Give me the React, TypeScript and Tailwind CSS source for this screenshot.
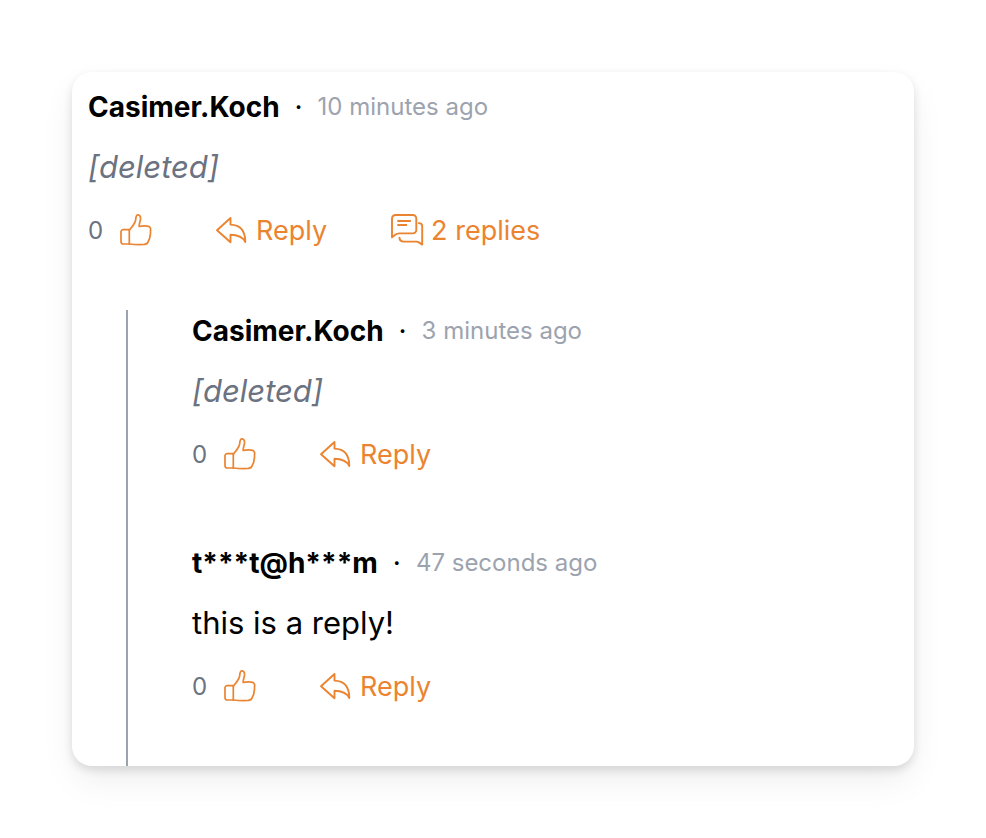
import type { ReactNode } from "react";

function Icon({ children, strokeWidth = 1.9 }: { children: ReactNode; strokeWidth?: number }) {
  return (
    <svg
      className="h-8 w-8 shrink-0 overflow-visible"
      viewBox="0 0 32 32"
      fill="none"
      stroke="currentColor"
      strokeWidth={strokeWidth}
      strokeLinejoin="round"
      strokeLinecap="round"
      aria-hidden="true"
    >
      {children}
    </svg>
  );
}

function LikeIcon() {
  return (
    <Icon strokeWidth={1.7}>
      <path d="M3.2 14.600h6.100v14.400H3.200a2.200 2.200 0 0 1-2.200-2.200v-10a2.200 2.200 0 0 1 2.200-2.200Z" />
      <path d="M9.300 15.200C11.600 12.500 14.900 8.500 15.600 5.200 15.900 3 15.700-.2 17.900-.2c2.300 0 3.100 2.600 2.500 5.200-.4 2-1.300 3.700-1.300 6.300 2.500-.3 5.500-.5 8.200-.2 2.700.3 3.600 2 3.300 4-.1 1.100-.2 1.600-.1 2.600.1 1.200-.2 1.900-.4 2.800-.2 1.100-.1 1.800-.5 2.900-.4 1.200-.8 1.500-1.200 2.800-.6 2-1.800 3-4 3.200-5 .3-10 .2-15.100-.4" />
    </Icon>
  );
}

function ReplyIcon() {
  return (
    <Icon>
      <path d="M1 15.200 14.500 3v6.600C23.500 9.900 29.300 15.500 29.300 27 26.500 21.600 21.500 19.800 14.500 19.800v7.500Z" />
    </Icon>
  );
}

function RepliesIcon() {
  return (
    <Icon>
      <path d="M1 22.300V3.500A3.500 3.500 0 0 1 4.500 0h17.300a3.500 3.500 0 0 1 3.500 3.500v11.400a3.500 3.500 0 0 1-3.500 3.500H8.200c-2 0-2.800.4-3.900 1.300Z" />
      <path d="M6.300 6h13.600M6.300 10h9.800" strokeLinecap="butt" />
      <path d="M27.700 8.100c2 0 3.500.9 3.500 3.200v18.300l-3.700-2.500c-.6-.4-1.100-.5-1.900-.5H12.500c-2.700 0-4-1.300-4-4" />
    </Icon>
  );
}

function Action({ icon, children }: { icon: ReactNode; children: ReactNode }) {
  return (
    <button type="button" className="flex items-center gap-2 text-[27px] leading-9">
      {icon}
      {children}
    </button>
  );
}

type CommentProps = {
  author: string;
  time: string;
  text?: string;
  replies?: number;
};

function Comment({ author, time, text, replies }: CommentProps) {
  return (
    <article className="flex flex-col gap-4 pb-[54px]">
      <header className="flex h-[42px] items-center text-[28px]">
        <h2 className="font-bold">{author}</h2>
        <span className="w-[38px] text-center">·</span>
        <time className="text-2xl text-[#9ca3af]">{time}</time>
      </header>
      {text ? (
        <p className="text-[31px] leading-[46px]">{text}</p>
      ) : (
        <p className="text-[31px] leading-[46px] text-[#6b7280] italic">[deleted]</p>
      )}
      <footer className="flex h-[50px] items-center gap-16 text-[#ea8430]">
        <div className="flex items-center gap-4">
          <span className="w-4 text-2xl text-[#6b7280]">0</span>
          <button type="button" aria-label="Like">
            <LikeIcon />
          </button>
        </div>
        <Action icon={<ReplyIcon />}>Reply</Action>
        {replies ? <Action icon={<RepliesIcon />}>{replies} replies</Action> : null}
      </footer>
    </article>
  );
}

export default function App() {
  return (
    <main className="bg-white p-[72px] font-['Inter',sans-serif] text-black">
      <section className="rounded-[20px] bg-white pt-[14px] shadow-[0_16px_36px_-4px_rgba(0,0,0,0.08),0_4px_10px_rgba(0,0,0,0.12)]">
        <div className="px-4">
          <Comment author="Casimer.Koch" time="10 minutes ago" replies={2} />
        </div>
        <div className="ml-[54px] flex flex-col gap-2 border-l-2 border-[#9ca3af] pr-4 pl-16">
          <Comment author="Casimer.Koch" time="3 minutes ago" />
          <Comment author="t***t@h***m" time="47 seconds ago" text="this is a reply!" />
        </div>
      </section>
    </main>
  );
}
